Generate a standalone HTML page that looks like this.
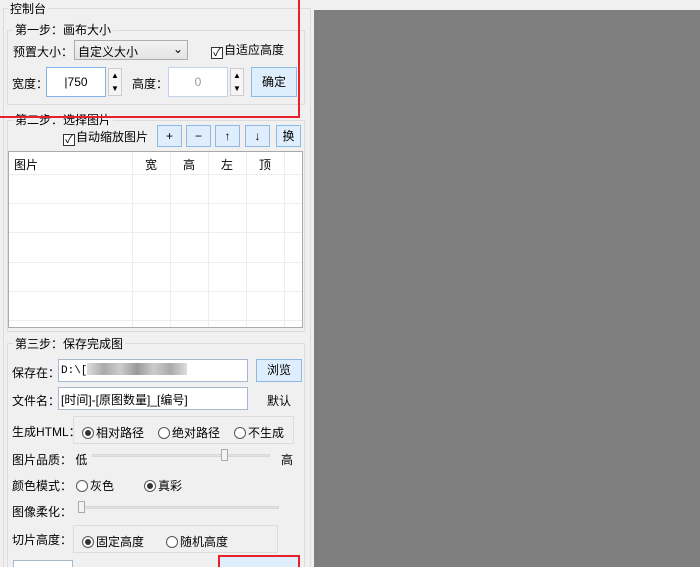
<!DOCTYPE html><html><head><meta charset="utf-8"><style>
*{margin:0;padding:0;box-sizing:border-box}
html,body{width:700px;height:567px;overflow:hidden}
body{background:#f0f0f0;position:relative;font-family:"Liberation Sans","Noto Sans CJK SC",sans-serif;font-size:12px;color:#000}
.a{position:absolute;white-space:nowrap}
.gb{position:absolute;border:1px solid #dcdcdc}
.in{position:absolute;background:#fff;border:1px solid #a8b8cc}
.btn{position:absolute;background:#dfeefc;border:1px solid #8fb8e4;text-align:center;font-size:12px}
.spin{position:absolute;width:14px;height:28px;background:#f5f5f5;border:1px solid #ccc;font-size:8px;text-align:center;line-height:13px}
.cb{display:inline-block;width:12px;height:12px;border:1px solid #333;background:#fff;vertical-align:-2px;font-size:11px;line-height:10px;text-align:center;margin-right:1px}
.rd{display:inline-block;width:12px;height:12px;border:1px solid #555;border-radius:50%;background:#fff;vertical-align:-2px;margin-right:2px;position:relative}
.rd.on::after{content:"";position:absolute;left:2px;top:2px;width:6px;height:6px;border-radius:50%;background:#333}
</style></head><body>
<div class="a" style="left:314px;top:10px;width:386px;height:557px;background:#7f7f7f"></div>
<div class="gb" style="left:3px;top:8px;width:308px;height:570px"></div>
<div class="a" style="left:8px;top:0px;background:#f0f0f0;padding:0 2px">控制台</div>
<div class="gb" style="left:7px;top:30px;width:298px;height:75px"></div>
<div class="a" style="left:13px;top:21px;background:#f0f0f0;padding:0 2px">第一步：画布大小</div>
<div class="a" style="left:13px;top:43px">预置大小：</div>
<div class="a" style="left:74px;top:40px;width:114px;height:20px;border:1px solid #adadad;background:linear-gradient(#f2f2f2,#e4e4e4);padding:2px 3px">自定义大小<span style="position:absolute;right:4px;top:1px">⌄</span></div>
<div class="a" style="left:211px;top:41px"><span class="cb">✓</span>自适应高度</div>
<div class="a" style="left:12px;top:75px">宽度：</div>
<div class="in" style="left:46px;top:67px;width:60px;height:30px;border-color:#7eb4ea;text-align:center;line-height:28px">|750</div>
<div class="spin" style="left:108px;top:68px">▲<br>▼</div>
<div class="a" style="left:132px;top:75px">高度：</div>
<div class="in" style="left:168px;top:67px;width:60px;height:30px;border-color:#c0d4ea;text-align:center;line-height:28px;color:#999">0</div>
<div class="spin" style="left:230px;top:68px">▲<br>▼</div>
<div class="btn" style="left:251px;top:67px;width:46px;height:30px;line-height:28px">确定</div>
<div class="gb" style="left:7px;top:120px;width:298px;height:212px"></div>
<div class="a" style="left:13px;top:111px;background:#f0f0f0;padding:0 2px">第二步：选择图片</div>
<div class="a" style="left:63px;top:128px"><span class="cb">✓</span>自动缩放图片</div>
<div class="btn" style="left:157px;top:125px;width:25px;height:22px;line-height:20px">+</div>
<div class="btn" style="left:186px;top:125px;width:25px;height:22px;line-height:20px">−</div>
<div class="btn" style="left:215px;top:125px;width:25px;height:22px;line-height:20px">↑</div>
<div class="btn" style="left:245px;top:125px;width:25px;height:22px;line-height:20px">↓</div>
<div class="btn" style="left:276px;top:125px;width:25px;height:22px;line-height:20px">换</div>
<div class="a" style="left:8px;top:151px;width:295px;height:177px;background:#fff;border:1px solid #aaa;overflow:hidden">
<svg width="295" height="177" style="position:absolute;left:0;top:0">
<g stroke="#e8eef4" stroke-width="1">
<line x1="123.5" y1="0" x2="123.5" y2="177"/><line x1="161.5" y1="0" x2="161.5" y2="177"/><line x1="199.5" y1="0" x2="199.5" y2="177"/><line x1="237.5" y1="0" x2="237.5" y2="177"/><line x1="275.5" y1="0" x2="275.5" y2="177"/>
<line x1="0" y1="22.5" x2="295" y2="22.5"/><line x1="0" y1="51.5" x2="295" y2="51.5"/><line x1="0" y1="80.5" x2="295" y2="80.5"/><line x1="0" y1="110.5" x2="295" y2="110.5"/><line x1="0" y1="139.5" x2="295" y2="139.5"/><line x1="0" y1="168.5" x2="295" y2="168.5"/>
</g></svg>
<div class="a" style="left:5px;top:4px">图片</div><div class="a" style="left:136px;top:4px">宽</div><div class="a" style="left:174px;top:4px">高</div><div class="a" style="left:212px;top:4px">左</div><div class="a" style="left:250px;top:4px">顶</div>
</div>
<div class="gb" style="left:7px;top:343px;width:298px;height:230px"></div>
<div class="a" style="left:13px;top:335px;background:#f0f0f0;padding:0 2px">第三步：保存完成图</div>
<div class="a" style="left:12px;top:364px">保存在：</div>
<div class="in" style="left:58px;top:359px;width:190px;height:23px;padding:3px 2px;font-family:'Liberation Mono',monospace;font-size:11px">D:\[<span style="display:inline-block;width:100px;height:12px;background:linear-gradient(90deg,#ddd,#aaa,#ccc,#999,#ccc,#aaa,#ddd);vertical-align:-2px"></span></div>
<div class="btn" style="left:256px;top:359px;width:46px;height:23px;line-height:21px">浏览</div>
<div class="a" style="left:12px;top:392px">文件名：</div>
<div class="in" style="left:58px;top:387px;width:190px;height:23px;padding:3px 2px">[时间]-[原图数量]_[编号]</div>
<div class="a" style="left:267px;top:392px">默认</div>
<div class="a" style="left:12px;top:423px">生成HTML：</div>
<div class="gb" style="left:73px;top:416px;width:221px;height:28px"></div>
<div class="a" style="left:82px;top:424px"><span class="rd on"></span>相对路径</div>
<div class="a" style="left:158px;top:424px"><span class="rd"></span>绝对路径</div>
<div class="a" style="left:234px;top:424px"><span class="rd"></span>不生成</div>
<div class="a" style="left:12px;top:451px">图片品质：&nbsp;低</div>
<div class="a" style="left:92px;top:454px;width:178px;height:3px;background:#e2e2e2;border:1px solid #d8d8d8"></div>
<div class="a" style="left:221px;top:449px;width:7px;height:12px;background:#f4f4f4;border:1px solid #aaa"></div>
<div class="a" style="left:281px;top:451px">高</div>
<div class="a" style="left:12px;top:477px">颜色模式：</div>
<div class="a" style="left:76px;top:477px"><span class="rd"></span>灰色</div>
<div class="a" style="left:144px;top:477px"><span class="rd on"></span>真彩</div>
<div class="a" style="left:12px;top:503px">图像柔化：</div>
<div class="a" style="left:79px;top:506px;width:200px;height:3px;background:#e2e2e2;border:1px solid #d8d8d8"></div>
<div class="a" style="left:78px;top:501px;width:7px;height:12px;background:#f4f4f4;border:1px solid #aaa"></div>
<div class="a" style="left:12px;top:531px">切片高度：</div>
<div class="gb" style="left:73px;top:525px;width:205px;height:28px"></div>
<div class="a" style="left:82px;top:533px"><span class="rd on"></span>固定高度</div>
<div class="a" style="left:166px;top:533px"><span class="rd"></span>随机高度</div>
<div class="in" style="left:13px;top:560px;width:60px;height:7px;border-bottom:none"></div>
<div class="a" style="left:218px;top:555px;width:82px;height:12px;background:#dfeefc;border:2px solid #e8202a;border-bottom:none"></div>
<div class="a" style="left:0;top:116px;width:300px;height:2px;background:#e8202a"></div>
<div class="a" style="left:298px;top:0;width:2px;height:118px;background:#e8202a"></div>
</body></html>
